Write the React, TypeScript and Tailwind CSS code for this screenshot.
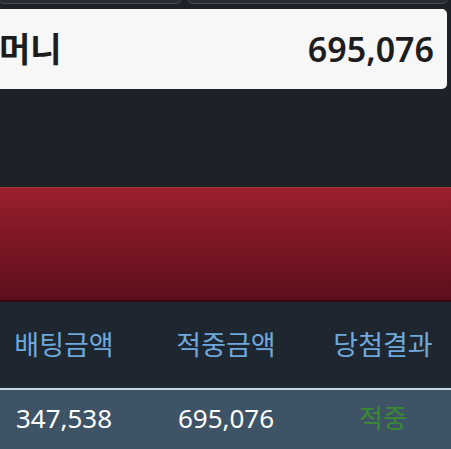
import React from 'react';

const font = { fontFamily: '"Noto Sans", "Noto Sans CJK KR", sans-serif' };

export default function App() {
  return (
    <div className="w-[451px] h-[449px] overflow-hidden bg-[#1c2227] flex flex-col" style={font}>
      {/* tab buttons peeking from the top */}
      <div className="flex gap-[5px] h-[4px] items-end">
        <div className="w-[184px] -ml-[2px] h-[30px] rounded-b-[6px] border border-[#464c52] bg-[#262c32]" />
        <div className="w-[261px] h-[30px] rounded-b-[6px] border border-[#464c52] bg-[#262c32]" />
      </div>

      {/* money box */}
      <div className="mt-[5px] -ml-[10px] w-[457px] h-[80px] rounded-[5px] bg-[#f7f7f8] flex items-center justify-between pl-[9px] pr-[13px]">
        <span className="text-[34px] font-semibold text-[#1d1d1d] leading-none">머니</span>
        <span className="text-[34px] font-semibold text-[#1d1d1d] leading-none">695,076</span>
      </div>

      {/* red band */}
      <div className="mt-[98px] h-[115px] border-t border-[#a93331] border-b-2 border-b-[#3a0810] bg-gradient-to-b from-[#9b1f2e] to-[#5d0e1b]" />

      {/* table header */}
      <div className="h-[86px] bg-[#1e2630] grid grid-cols-[128px_196px_118px] items-center text-[27px] text-[#6fa8dc]">
        <div className="text-center">배팅금액</div>
        <div className="text-center">적중금액</div>
        <div className="text-center">당첨결과</div>
      </div>
      <div className="h-[2px] bg-[#c6d6e2]" />

      {/* table row */}
      <div className="flex-1 bg-[#3e5366] grid grid-cols-[128px_196px_118px] items-center text-[26px] text-white pb-[2px]">
        <div className="text-center">347,538</div>
        <div className="text-center">695,076</div>
        <div className="text-center text-[#3a8a32]">적중</div>
      </div>
    </div>
  );
}
